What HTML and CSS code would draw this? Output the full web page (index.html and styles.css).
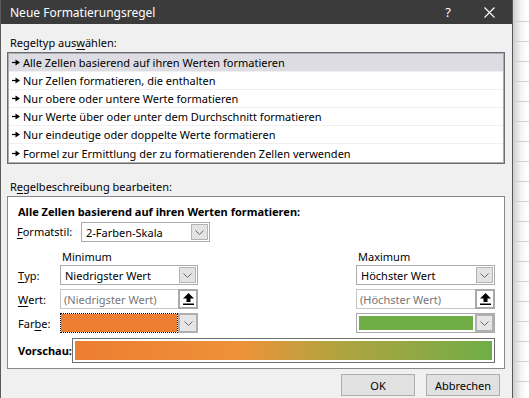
FILE: index.html
```html
<!DOCTYPE html>
<html lang="de">
<head>
  <meta charset="UTF-8">
  <title>Neue Formatierungsregel</title>
  <link rel="stylesheet" href="styles.css">
</head>
<body>
  <div class="screen">
    <div class="dialog">
      <div class="titlebar">
        <span class="title">Neue Formatierungsregel</span>
        <span class="help">?</span>
        <span class="close">
          <svg width="11" height="11" viewBox="0 0 11 11"><path d="M0.5 0.5 L10.5 10.5 M10.5 0.5 L0.5 10.5" stroke="#fff" stroke-width="1.1" fill="none"/></svg>
        </span>
      </div>

      <div class="content">
        <div class="section-label">Regeltyp aus<u>w</u>ählen:</div>
        <ul class="rule-list">
          <li class="selected"><svg class="arrow" width="8" height="7" viewBox="0 0 8 7"><path d="M0 3.5 H4.5" stroke="#000" stroke-width="1.2"/><polygon points="3.5,0.5 8,3.5 3.5,6.5" fill="#000"/></svg>Alle Zellen basierend auf ihren Werten formatieren</li>
          <li><svg class="arrow" width="8" height="7" viewBox="0 0 8 7"><path d="M0 3.5 H4.5" stroke="#000" stroke-width="1.2"/><polygon points="3.5,0.5 8,3.5 3.5,6.5" fill="#000"/></svg>Nur Zellen formatieren, die enthalten</li>
          <li><svg class="arrow" width="8" height="7" viewBox="0 0 8 7"><path d="M0 3.5 H4.5" stroke="#000" stroke-width="1.2"/><polygon points="3.5,0.5 8,3.5 3.5,6.5" fill="#000"/></svg>Nur obere oder untere Werte formatieren</li>
          <li><svg class="arrow" width="8" height="7" viewBox="0 0 8 7"><path d="M0 3.5 H4.5" stroke="#000" stroke-width="1.2"/><polygon points="3.5,0.5 8,3.5 3.5,6.5" fill="#000"/></svg>Nur Werte über oder unter dem Durchschnitt formatieren</li>
          <li><svg class="arrow" width="8" height="7" viewBox="0 0 8 7"><path d="M0 3.5 H4.5" stroke="#000" stroke-width="1.2"/><polygon points="3.5,0.5 8,3.5 3.5,6.5" fill="#000"/></svg>Nur eindeutige oder doppelte Werte formatieren</li>
          <li><svg class="arrow" width="8" height="7" viewBox="0 0 8 7"><path d="M0 3.5 H4.5" stroke="#000" stroke-width="1.2"/><polygon points="3.5,0.5 8,3.5 3.5,6.5" fill="#000"/></svg>Formel zur Ermittlung der zu formatierenden Zellen verwenden</li>
        </ul>

        <div class="section-label second">R<u>e</u>gelbeschreibung bearbeiten:</div>
        <div class="desc-box">
          <div class="desc-title">Alle Zellen basierend auf ihren Werten formatieren:</div>

          <div class="style-row">
            <span class="lbl style-lbl"><u>F</u>ormatstil:</span>
            <div class="select style-select">
              <span class="value">2-Farben-Skala</span>
              <span class="drop"><svg width="9" height="5" viewBox="0 0 9 5"><path d="M0.5 0.5 L4.5 4.5 L8.5 0.5" stroke="#666" stroke-width="1" fill="none"/></svg></span>
            </div>
          </div>

          <div class="grid">
            <span></span>
            <span class="head">Minimum</span>
            <span></span>
            <span class="head">Maximum</span>

            <span class="lbl"><u>T</u>yp:</span>
            <div class="select">
              <span class="value">Niedrigster Wert</span>
              <span class="drop"><svg width="9" height="5" viewBox="0 0 9 5"><path d="M0.5 0.5 L4.5 4.5 L8.5 0.5" stroke="#666" stroke-width="1" fill="none"/></svg></span>
            </div>
            <span></span>
            <div class="select">
              <span class="value">Höchster Wert</span>
              <span class="drop"><svg width="9" height="5" viewBox="0 0 9 5"><path d="M0.5 0.5 L4.5 4.5 L8.5 0.5" stroke="#666" stroke-width="1" fill="none"/></svg></span>
            </div>

            <span class="lbl"><u>W</u>ert:</span>
            <div class="field">
              <span class="placeholder">(Niedrigster Wert)</span>
              <span class="pick"><svg width="11" height="12" viewBox="0 0 11 12"><polygon points="5.5,0 11,5.5 7.5,5.5 7.5,9 3.5,9 3.5,5.5 0,5.5" fill="#000"/><rect x="0" y="10.5" width="11" height="1.5" fill="#000"/></svg></span>
            </div>
            <span></span>
            <div class="field">
              <span class="placeholder">(Höchster Wert)</span>
              <span class="pick"><svg width="11" height="12" viewBox="0 0 11 12"><polygon points="5.5,0 11,5.5 7.5,5.5 7.5,9 3.5,9 3.5,5.5 0,5.5" fill="#000"/><rect x="0" y="10.5" width="11" height="1.5" fill="#000"/></svg></span>
            </div>

            <span class="lbl">Far<u>b</u>e:</span>
            <div class="color focused">
              <span class="swatch orange"></span>
              <span class="drop heavy"><svg width="9" height="5" viewBox="0 0 9 5"><path d="M0.5 0.5 L4.5 4.5 L8.5 0.5" stroke="#666" stroke-width="1" fill="none"/></svg></span>
            </div>
            <span></span>
            <div class="color">
              <span class="swatch green"></span>
              <span class="drop heavy"><svg width="9" height="5" viewBox="0 0 9 5"><path d="M0.5 0.5 L4.5 4.5 L8.5 0.5" stroke="#666" stroke-width="1" fill="none"/></svg></span>
            </div>
          </div>

          <div class="preview-row">
            <span class="preview-lbl">Vorschau:</span>
            <div class="preview"><div class="gradient"></div></div>
          </div>
        </div>

        <div class="buttons">
          <button class="btn">OK</button>
          <button class="btn">Abbrechen</button>
        </div>
      </div>
    </div>
    <div class="sheet"></div>
  </div>
</body>
</html>
```

FILE: styles.css
```css
* {
  box-sizing: border-box;
}
body {
  margin: 0;
  font-family: "Noto Sans", sans-serif;
  font-size: 11px;
  color: #000;
}
.screen {
  display: flex;
  width: 529px;
  height: 398px;
  overflow: hidden;
}
.dialog {
  width: 513px;
  flex: none;
  display: flex;
  flex-direction: column;
  background: #f0f0f0;
  border-left: 1px solid #5a5a5a;
  border-right: 1px solid #5a5a5a;
}
.titlebar {
  height: 24px;
  flex: none;
  display: flex;
  align-items: center;
  background: #3b3b3b;
  color: #fff;
  padding-left: 9px;
}
.title {
  font-size: 12px;
  flex: 1;
}
.help {
  font-size: 13px;
  margin-right: 33px;
}
.close {
  display: flex;
  margin-right: 17px;
}

.content {
  padding: 11px 7px 0 6px;
}
.section-label {
  height: 16px;
  line-height: 16px;
  padding-left: 3px;
  margin-bottom: 1px;
}
.section-label.second {
  margin-top: 15px;
}
u {
  text-decoration-thickness: 1px;
  text-underline-offset: 2px;
}

.rule-list {
  list-style: none;
  margin: 0;
  background: #fff;
  border: 1px solid #6a6e73;
  box-shadow: inset 0 0 0 1px #a9adb2;
  padding: 1px;
}
.rule-list li {
  height: 18px;
  display: flex;
  align-items: center;
  padding-left: 3px;
  border-bottom: 1px solid #f0f0f0;
}
.rule-list li:last-child {
  border-bottom: none;
}
.rule-list li.selected {
  background: #dcdce2;
}
.arrow {
  flex: none;
  margin-right: 3px;
}

.desc-box {
  background: #fff;
  border: 1px solid #85888d;
  height: 173px;
  padding: 7px 9px 5px 10px;
}
.desc-title {
  font-weight: bold;
  height: 16px;
  line-height: 16px;
}
.style-row {
  display: flex;
  margin-top: 2px;
  height: 20px;
}
.style-lbl {
  width: 64px;
  margin-left: -1px;
  line-height: 16px;
}
.style-select {
  width: 129px;
}

.grid {
  display: grid;
  grid-template-columns: 42px 138px 1fr 139px;
  grid-template-rows: 11px 20px 20px 20px;
  row-gap: 4px;
  margin-top: 8px;
}
.grid .head {
  line-height: 14px;
  padding-left: 2px;
}
.lbl {
  display: flex;
  align-items: center;
}

.select {
  display: flex;
  align-items: center;
  height: 20px;
  border: 1px solid #ababab;
  background: #fff;
  padding: 1px;
}
.value {
  flex: 1;
  padding-left: 3px;
}
.drop {
  width: 17px;
  height: 16px;
  display: flex;
  align-items: center;
  justify-content: center;
  background: #e3e3e3;
  border: 1px solid #b4b4b4;
}

.field {
  display: flex;
  height: 20px;
}
.placeholder {
  flex: 1;
  display: flex;
  align-items: center;
  padding-left: 3px;
  color: #767676;
  background: #fff;
  border: 1px solid #c6c6c6;
  border-right: none;
}
.pick {
  width: 20px;
  display: flex;
  align-items: center;
  justify-content: center;
  background: #fff;
  border: 2px solid #a9a9a9;
}

.color {
  display: flex;
  height: 20px;
  background: #fff;
  border: 1px solid #ababab;
}
.swatch {
  flex: 1;
  margin: 2px;
}
.color.focused {
  border: none;
}
.color.focused .swatch {
  margin: 0;
  border: 1px dotted #000;
  background-clip: padding-box;
}
.orange {
  background: #ed7d31;
}
.green {
  background: #70ad47;
}
.drop.heavy {
  width: 19px;
  height: auto;
  border: 2px solid #b0b0b0;
  background: #e6e6e6;
}
.color.focused .drop.heavy {
  width: 20px;
}

.preview-row {
  display: flex;
  align-items: center;
  margin-top: 5px;
  height: 25px;
}
.preview-lbl {
  width: 54px;
  font-weight: bold;
}
.preview {
  width: 424px;
  height: 25px;
  border: 1px solid #6f6f6f;
  padding: 2px;
}
.gradient {
  height: 100%;
  background: linear-gradient(to right, #ed7d31, #ee9238 40%, #b3a33f 62%, #70ad47);
}

.buttons {
  display: flex;
  justify-content: flex-end;
  gap: 11px;
  margin-top: 5px;
  padding-right: 5px;
}
.btn {
  width: 74px;
  height: 22px;
  font-family: "Noto Sans", sans-serif;
  font-size: 11px;
  background: #e1e1e1;
  border: 1px solid #adadad;
  padding: 0;
}

.sheet {
  flex: 1;
  background:
    repeating-linear-gradient(to bottom, transparent 0, transparent 19px, #d0d0d0 19px, #d0d0d0 20px),
    linear-gradient(to right, #cfcfcf, #f4f4f4 8px, #fff 14px);
  background-position: 0 2px, 0 0;
}
```
